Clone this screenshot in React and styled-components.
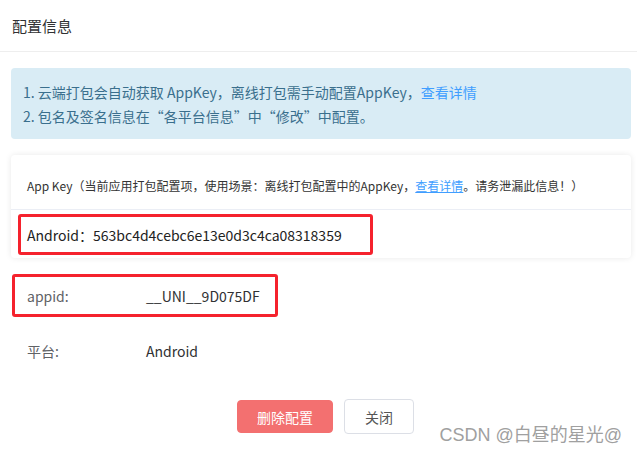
import styled, { createGlobalStyle } from "styled-components";

const Global = createGlobalStyle`
  html, body {
    margin: 0;
    padding: 0;
    background: #fff;
  }
  body {
    font-family: "Noto Sans CJK SC", "Noto Sans", sans-serif;
    color: #333;
  }
`;

const Dialog = styled.div`
  width: 637px;
  height: 453px;
  position: relative;
  overflow: hidden;
  background: #fff;
`;
const Header = styled.div`
  height: 51px;
  display: flex;
  align-items: center;
  padding-left: 12px;
  font-size: 15px;
  color: #303133;
  border-bottom: 1px solid #eeeeee;
`;
const Body = styled.div`
  padding: 16px 6px 0 11px;
  display: flex;
  flex-direction: column;
`;
const Alert = styled.div`
  background: #d9ecf5;
  color: #3a6f8d;
  border-radius: 4px;
  padding: 12px 12px 11px;
  font-size: 14px;
  line-height: 24px;
`;
const Link = styled.a`
  color: #409eff;
  text-decoration: ${(p) => (p.underline ? "underline" : "none")};
  cursor: pointer;
`;
const Card = styled.div`
  margin-top: 16px;
  border-radius: 4px;
  box-shadow: 0 0 6px rgba(0, 0, 0, 0.09);
  background: #fff;
`;
const CardHead = styled.div`
  height: 55px;
  padding-left: 16px;
  display: flex;
  align-items: center;
  padding-top: 6px;
  box-sizing: border-box;
  font-size: 12px;
  color: #333;
  border-bottom: 1px solid #ebeef5;
`;
const CardBody = styled.div`
  padding: 4px 0 3px 7px;
`;
const Mark = styled.div`
  display: inline-flex;
  align-items: center;
  box-sizing: border-box;
  width: ${(p) => p.w}px;
  height: ${(p) => p.h}px;
  border: 3px solid #f5222d;
  border-radius: 3px;
  padding-left: ${(p) => p.pad}px;
`;
const KeyText = styled.span`
  font-size: 14px;
  color: #222;
`;
const Row = styled.div`
  display: flex;
  align-items: center;
  font-size: 14px;
`;
const MarkRow = styled(Row)`
  margin-top: 16px;
  margin-left: 1px;
`;
const Label = styled.span`
  width: 119px;
  color: #606266;
`;
const Value = styled.span`
  color: #303133;
`;
const PlainRow = styled(Row)`
  height: 24px;
  margin-top: 22px;
  padding-left: 16px;
`;
const Footer = styled.div`
  display: flex;
  justify-content: center;
  gap: 11px;
  margin-top: 36px;
  padding-left: 9px;
`;
const Button = styled.button`
  height: ${(p) => (p.primary ? 33 : 35)}px;
  margin-top: ${(p) => (p.primary ? 1 : 0)}px;
  padding: 0 ${(p) => (p.primary ? 19 : 20)}px;
  font-family: inherit;
  font-size: 14px;
  border-radius: 4px;
  border: 1px solid ${(p) => (p.primary ? "#f37070" : "#dcdfe6")};
  background: ${(p) => (p.primary ? "#f37070" : "#fff")};
  color: ${(p) => (p.primary ? "#fff" : "#555")};
`;
const Watermark = styled.div`
  position: absolute;
  right: 15px;
  bottom: 7px;
  font-family: "Liberation Sans", "Noto Sans CJK SC", sans-serif;
  font-size: 18px;
  color: #a0a0a0;
`;

export default function App() {
  return (
    <Dialog>
      <Global />
      <Header>配置信息</Header>
      <Body>
        <Alert>
          <div>
            1. 云端打包会自动获取 AppKey，离线打包需手动配置AppKey，
            <Link>查看详情</Link>
          </div>
          <div>2. 包名及签名信息在“各平台信息”中“修改”中配置。</div>
        </Alert>
        <Card>
          <CardHead>
            App Key（当前应用打包配置项，使用场景：离线打包配置中的AppKey，
            <Link underline>查看详情</Link>。请务泄漏此信息！）
          </CardHead>
          <CardBody>
            <Mark w={355} h={41} pad={6}>
              <KeyText>Android：563bc4d4cebc6e13e0d3c4ca08318359</KeyText>
            </Mark>
          </CardBody>
        </Card>
        <MarkRow>
          <Mark w={266} h={43} pad={12}>
            <Label>appid:</Label>
            <Value>__UNI__9D075DF</Value>
          </Mark>
        </MarkRow>
        <PlainRow>
          <Label>平台:</Label>
          <Value>Android</Value>
        </PlainRow>
        <Footer>
          <Button primary>删除配置</Button>
          <Button>关闭</Button>
        </Footer>
      </Body>
      <Watermark>CSDN @白昼的星光@</Watermark>
    </Dialog>
  );
}
